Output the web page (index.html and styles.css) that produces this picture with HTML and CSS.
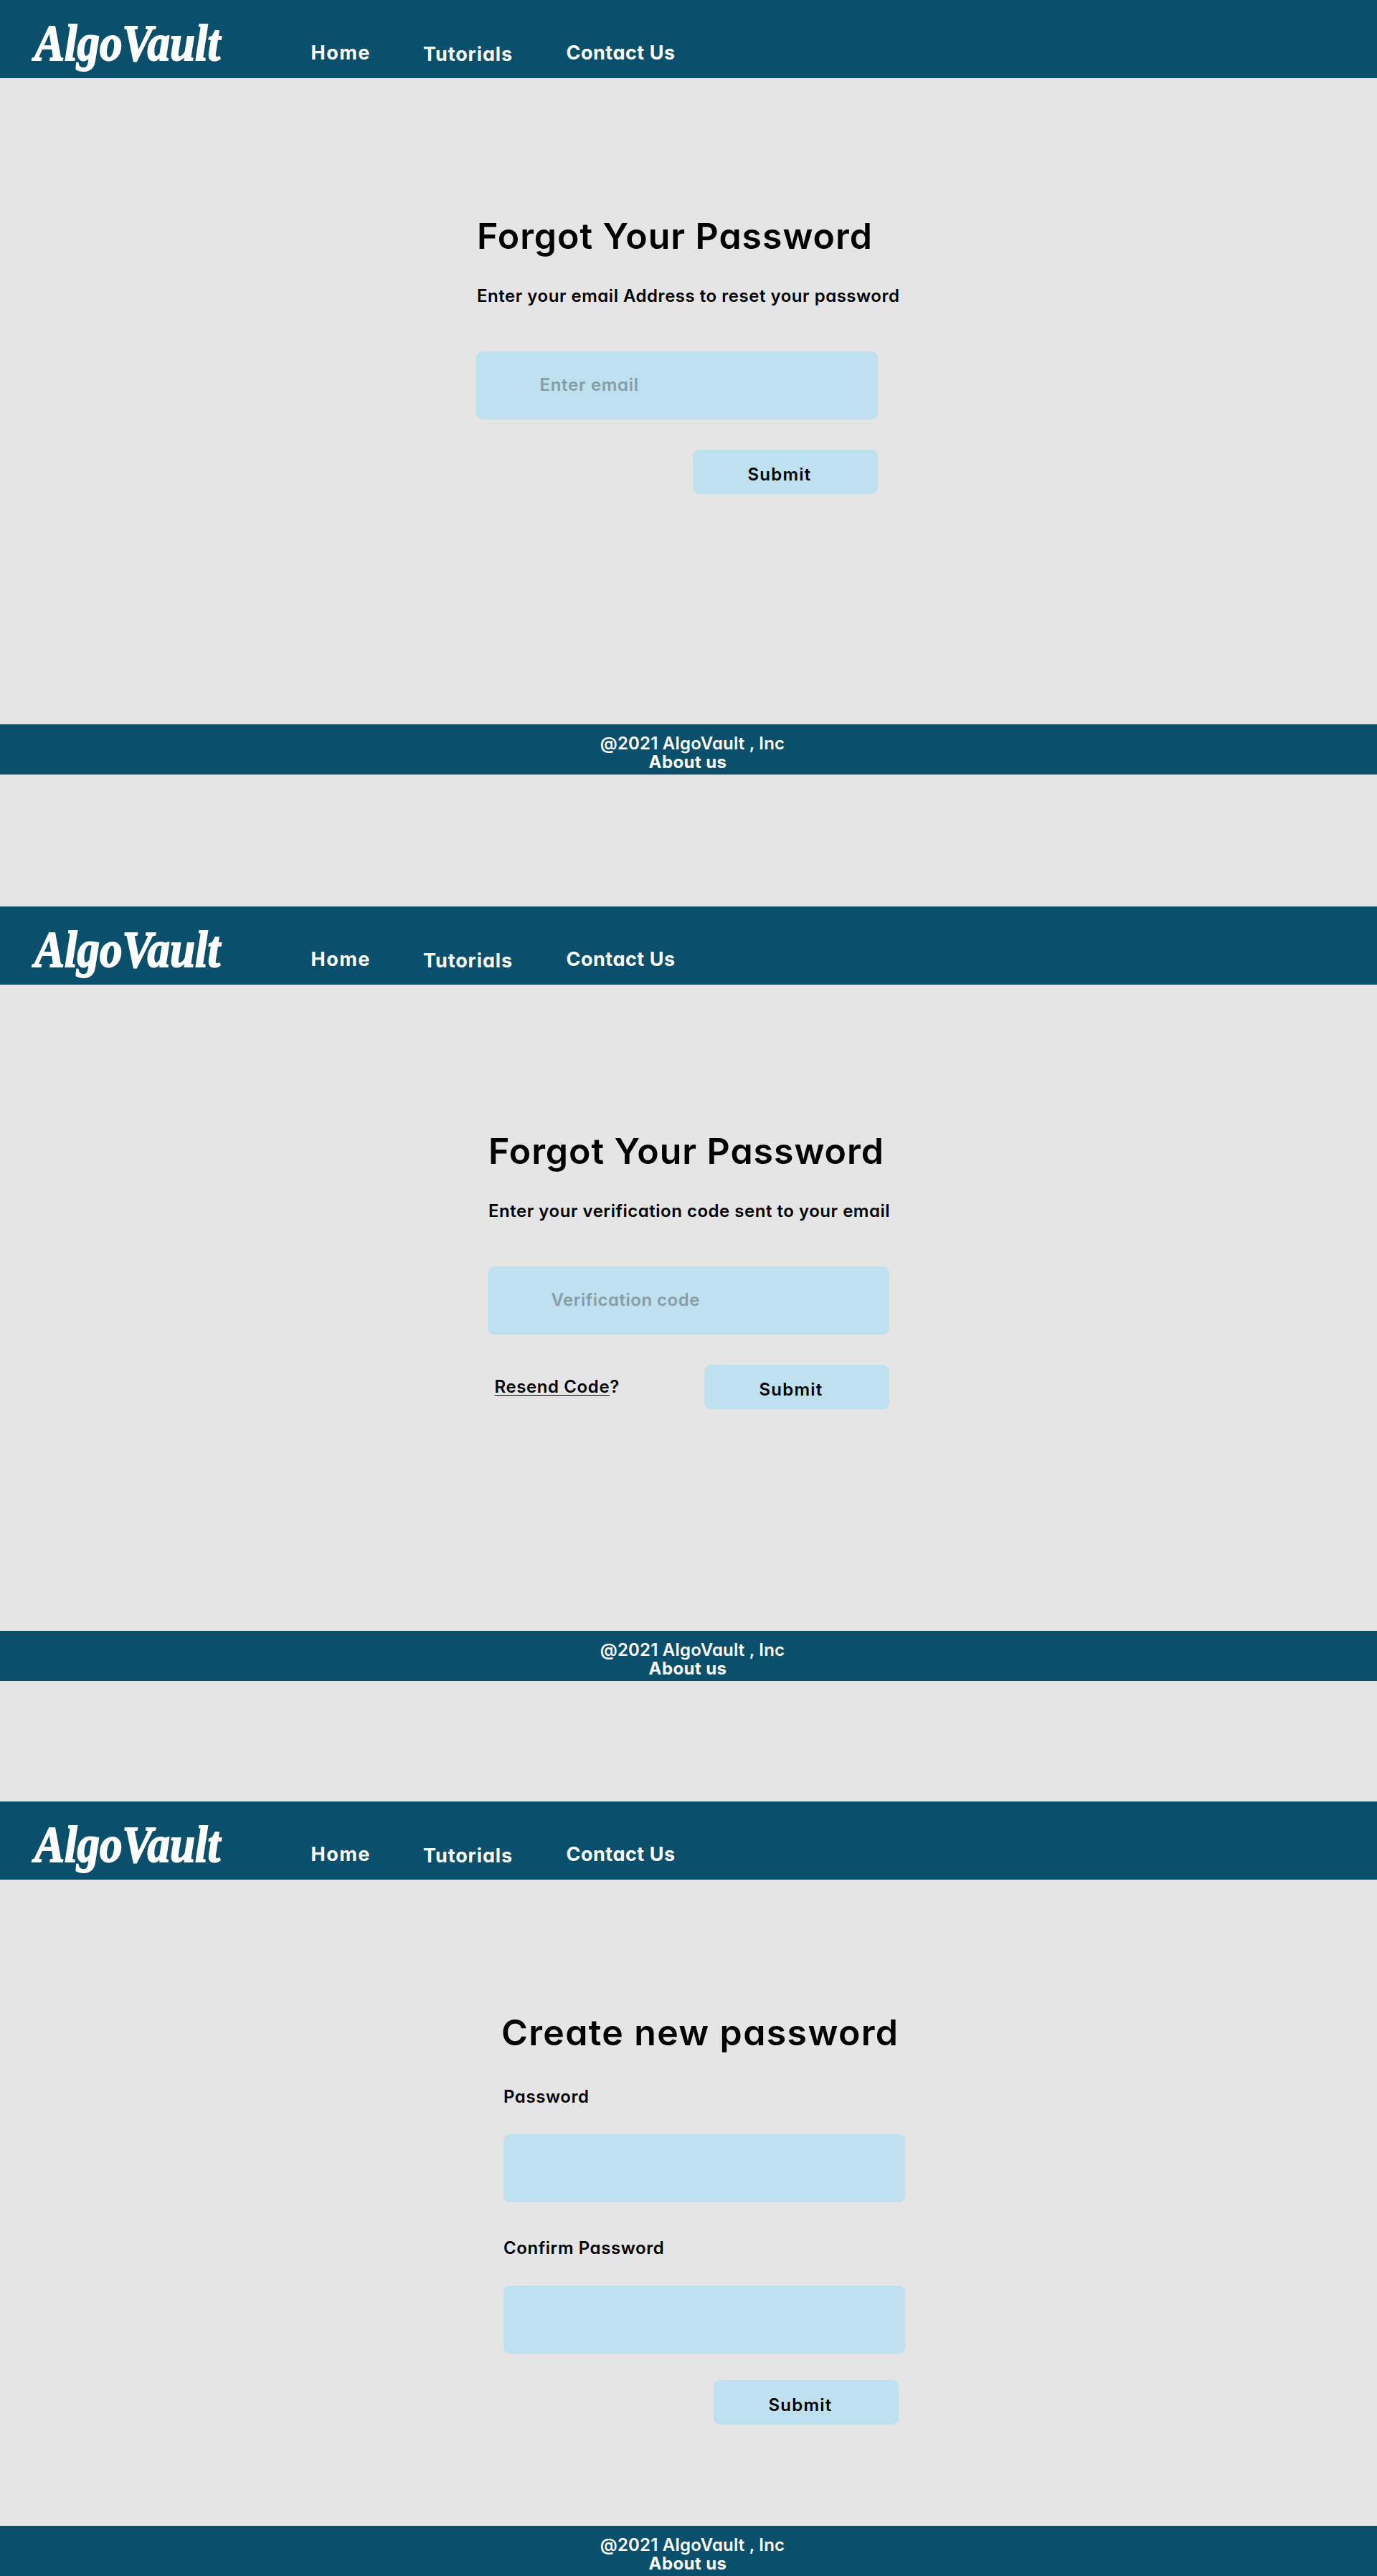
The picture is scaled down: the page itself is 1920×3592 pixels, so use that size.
FILE: index.html
```html
<!DOCTYPE html>
<html lang="en">
<head>
<meta charset="utf-8">
<title>AlgoVault</title>
<link rel="stylesheet" href="styles.css">
</head>
<body>
<section class="screen">
  <header class="topbar">
    <a class="logo">AlgoVault</a>
    <nav class="nav">
      <a class="nav-home">Home</a>
      <a class="nav-tutorials">Tutorials</a>
      <a class="nav-contact">Contact Us</a>
    </nav>
  </header>
  <main class="form form-email">
    <h1 class="title">Forgot Your Password</h1>
    <p class="hint">Enter your email Address to reset your password</p>
    <div class="field"><span class="placeholder placeholder-email">Enter email</span></div>
    <div class="actions"><button class="submit">Submit</button></div>
  </main>
  <footer class="footer">
    <p class="copyright">@2021 AlgoVault , Inc</p>
    <p class="about">About us</p>
  </footer>
</section>

<section class="screen">
  <header class="topbar">
    <a class="logo">AlgoVault</a>
    <nav class="nav">
      <a class="nav-home">Home</a>
      <a class="nav-tutorials">Tutorials</a>
      <a class="nav-contact">Contact Us</a>
    </nav>
  </header>
  <main class="form form-code">
    <h1 class="title">Forgot Your Password</h1>
    <p class="hint">Enter your verification code sent to your email</p>
    <div class="field"><span class="placeholder">Verification code</span></div>
    <div class="actions">
      <p class="resend"><a class="resend-link">Resend Code</a>?</p>
      <button class="submit">Submit</button>
    </div>
  </main>
  <footer class="footer">
    <p class="copyright">@2021 AlgoVault , Inc</p>
    <p class="about">About us</p>
  </footer>
</section>

<section class="screen">
  <header class="topbar">
    <a class="logo">AlgoVault</a>
    <nav class="nav">
      <a class="nav-home">Home</a>
      <a class="nav-tutorials">Tutorials</a>
      <a class="nav-contact">Contact Us</a>
    </nav>
  </header>
  <main class="form form-new">
    <h1 class="title">Create new password</h1>
    <p class="label">Password</p>
    <div class="field"></div>
    <p class="label label-confirm">Confirm Password</p>
    <div class="field"></div>
    <div class="actions"><button class="submit">Submit</button></div>
  </main>
  <footer class="footer">
    <p class="copyright">@2021 AlgoVault , Inc</p>
    <p class="about">About us</p>
  </footer>
</section>
</body>
</html>
```
FILE: styles.css
```css
* { box-sizing: border-box; }

body {
  margin: 0;
  display: flex;
  flex-direction: column;
  background: #e5e5e5;
  color: #000;
  font: 600 24px/30px Inter, "Liberation Sans", sans-serif;
  font-feature-settings: "cv11";
}

h1, p { margin: 0; }

.screen {
  height: 1080px;
  display: flex;
  flex-direction: column;
}
.screen:nth-of-type(2) { margin-top: 184px; }
.screen:nth-of-type(3) { margin-top: 168px; }

/* Top bar */
.topbar {
  height: 109px;
  flex: none;
  display: flex;
  align-items: flex-start;
  background: #0a4f6b;
  color: #fff;
}
.logo {
  width: 385.5px;
  margin: 20px 0 0 48px;
  font: italic 700 72px/80px "Liberation Serif", serif;
  -webkit-text-stroke: 2px #fff;
  transform: scaleX(0.875);
  transform-origin: 0 0;
}
.nav {
  display: grid;
  grid-template-columns: 156.5px 199.5px auto;
  margin-top: 58px;
  font-size: 27px;
  font-weight: 700;
  line-height: 32px;
}
.nav-home { letter-spacing: 1.5px; }
.nav-tutorials { letter-spacing: 0.9px; padding-top: 2px; }
.nav-contact { letter-spacing: 0.5px; }

/* Forms */
.form {
  flex: 1;
  width: 560px;
  display: flex;
  flex-direction: column;
}
.form-email { margin-left: 664px; padding-top: 190px; }
.form-code { margin-left: 680px; padding-top: 202px; }
.form-new { margin-left: 702px; padding-top: 183px; }

.title {
  padding-left: 1px;
  font-size: 50px;
  font-weight: 600;
  line-height: 60px;
  letter-spacing: 0.95px;
  white-space: nowrap;
}
.form-new .title {
  margin-left: -4px;
  letter-spacing: 1.36px;
}
.hint {
  margin: 39px 0 62px;
  padding-left: 1px;
  letter-spacing: 0.52px;
  white-space: nowrap;
}
.label {
  margin: 45px 0 37px;
  letter-spacing: 0.57px;
}
.label-confirm { margin-top: 49px; }

.field {
  height: 95px;
  flex: none;
  display: flex;
  align-items: center;
  padding: 0 0 2px 88.5px;
  border-radius: 9px;
  background: #bfe0ef;
}
.placeholder {
  color: #869da7;
  font-weight: 600;
  letter-spacing: 0.5px;
}
.placeholder-email { letter-spacing: 0.7px; }

.actions {
  display: flex;
  margin-top: 42px;
}
.form-new .actions {
  margin: 37px 9px 0 0;
}
.resend {
  margin: 16px 0 0 9.5px;
  letter-spacing: 0.6px;
}
.resend-link {
  text-decoration: underline;
  text-decoration-thickness: 1px;
  text-underline-offset: 3px;
  text-decoration-skip-ink: none;
}
.submit {
  width: 258px;
  height: 62px;
  margin-left: auto;
  padding: 7px 0 0 76.5px;
  border: 0;
  border-radius: 9px;
  background: #bfe0ef;
  color: #000;
  font: inherit;
  font-feature-settings: inherit;
  letter-spacing: 1.2px;
  text-align: left;
}

/* Footer */
.footer {
  height: 70px;
  flex: none;
  padding-top: 14px;
  background: #0a4f6b;
  color: #fff;
  line-height: 26px;
  text-align: center;
}
.copyright { padding-left: 11px; letter-spacing: 0.2px; }
.about { margin-left: -2px; font-weight: 700; letter-spacing: 0.4px; }
```
